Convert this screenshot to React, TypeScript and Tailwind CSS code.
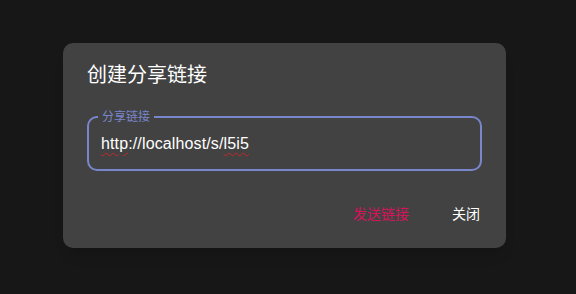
export default function App() {
  const font = { fontFamily: '"Liberation Sans", "Noto Sans CJK SC", sans-serif' };

  return (
    <div className="w-[576px] h-[294px] bg-[#171717] pl-[63px] pt-[43px]" style={font}>
      <div className="w-[443px] h-[205px] bg-[#424242] rounded-[10px] shadow-[0_11px_15px_-7px_rgba(0,0,0,0.2)] flex flex-col">
        <h2 className="px-6 pt-4 h-[48px] text-[20px] leading-[32px] text-white font-normal">
          创建分享链接
        </h2>

        <div className="px-6 mt-[25px]">
          <div className="relative h-[55px] rounded-[10px] border-2 border-[#7986cb] flex items-center px-[12px]">
            <span className="absolute -top-[9px] left-[9px] px-[4px] bg-[#424242] text-[12px] leading-[16px] text-[#7986cb]">
              分享链接
            </span>
            <span className="text-[16px] text-white leading-[20px] tracking-[0.13px]">
              <span className="underline decoration-wavy decoration-[#c62828] decoration-1 underline-offset-[3px]">
                http
              </span>
              ://localhost/s/
              <span className="underline decoration-wavy decoration-[#c62828] decoration-1 underline-offset-[3px]">
                l5i5
              </span>
            </span>
          </div>
        </div>

        <div className="mt-[25px] h-[36px] flex items-center justify-end pr-[26px] gap-[43px] text-[14px] leading-[20px]">
          <button className="text-[#d4145a]">发送链接</button>
          <button className="text-white">关闭</button>
        </div>
      </div>
    </div>
  );
}
